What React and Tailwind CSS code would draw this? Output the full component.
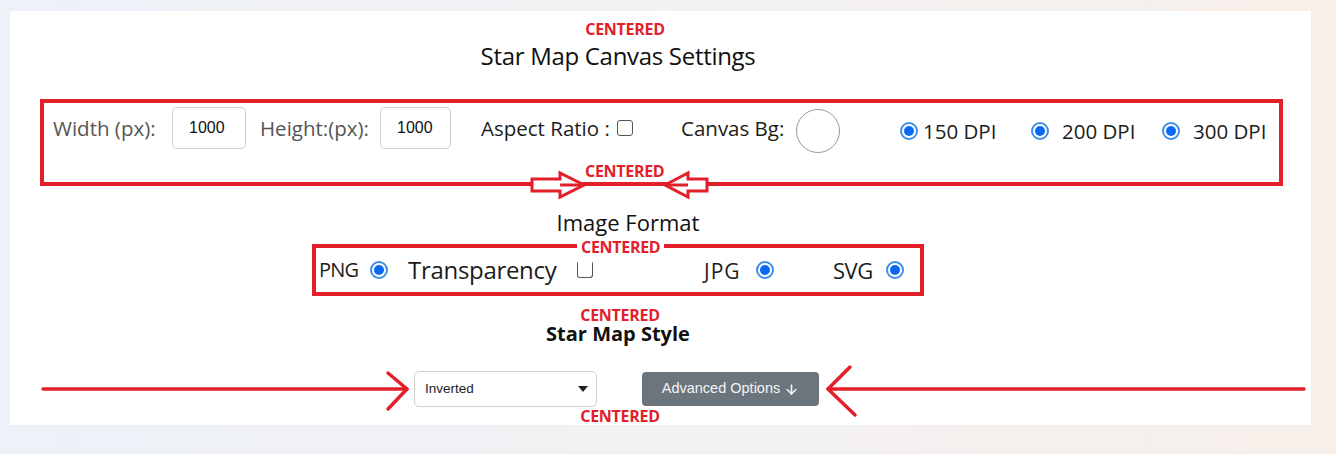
import { ArrowDown } from "lucide-react";

const sans = "font-['Open_Sans',_'Noto_Sans',_sans-serif]";
const arial = "font-['Liberation_Sans',_Arial,_sans-serif]";

function Centered({ className = "" }) {
  return (
    <div
      className={`${sans} text-[16px] leading-[16px] font-bold text-[#e3202a] tracking-[-0.3px] ${className}`}
    >
      CENTERED
    </div>
  );
}

function Radio() {
  return (
    <span className="flex h-[18px] w-[18px] shrink-0 items-center justify-center rounded-full border-[2px] border-[#3d8ee8] bg-white">
      <span className="h-[10px] w-[10px] rounded-full bg-[#0b68f2]" />
    </span>
  );
}

function Checkbox({ open = false }) {
  return (
    <span
      className={`block h-[16px] w-[16px] shrink-0 rounded-[3px] border-[1.5px] border-[#555] bg-white ${
        open ? "border-t-transparent rounded-t-none" : ""
      }`}
    />
  );
}

function SizeInput({ value, width }) {
  return (
    <div
      className={`${arial} flex h-[42px] items-center rounded-[5px] border border-[#cfcfcf] bg-white pl-[16px] text-[16px] text-[#111] ${width}`}
    >
      {value}
    </div>
  );
}

export default function App() {
  return (
    <div className="h-[454px] w-full overflow-hidden bg-linear-to-r from-[#edf1f8] via-[#f2f1f3] to-[#f7efe9] pl-[10px] pt-[11px]">
      <div className="relative h-[414px] w-[1301px] bg-white">
        <div className="flex w-[1216px] flex-col items-center pt-[10px]">
          <Centered className="ml-[14px]" />
          <h1 className={`${sans} mt-[4px] text-[24px] leading-[30px] tracking-[-0.3px] text-[#111]`}>
            Star Map Canvas Settings
          </h1>
        </div>

        {/* canvas size row */}
        <div className="relative ml-[30px] mt-[28px] h-[87px] w-[1243px] border-[4px] border-[#e3202a]">
          <div className={`${sans} flex h-[50px] items-center pl-[9px] text-[20.5px]`}>
            <span className="w-[119px] text-[#555]">Width (px):</span>
            <SizeInput value="1000" width="w-[74px]" />
            <span className="ml-[14px] w-[120px] text-[#555]">Height:(px):</span>
            <SizeInput value="1000" width="w-[71px]" />
            <span className="ml-[30px] w-[136px] text-[#1c1c1c]">Aspect Ratio :</span>
            <Checkbox />
            <span className="ml-[48px] w-[115px] text-[#1c1c1c]">Canvas Bg:</span>
            <span className="mt-[6px] block h-[44px] w-[44px] shrink-0 rounded-full border border-[#9a9a9a] bg-white" />
            <div className="mt-[6px] ml-[60px] flex items-center">
              <Radio />
              <span className="ml-[5px] w-[108px] text-[#1c1c1c]">150 DPI</span>
              <Radio />
              <span className="ml-[13px] w-[100px] text-[#1c1c1c]">200 DPI</span>
              <Radio />
              <span className="ml-[13px] text-[#1c1c1c]">300 DPI</span>
            </div>
          </div>
          <Centered className="absolute left-[541px] top-[60px]" />
          <svg
            className="absolute left-[476px] top-[64px]"
            width="200"
            height="36"
            viewBox="0 0 200 36"
            fill="none"
            stroke="#e3202a"
            strokeWidth="3"
            strokeLinejoin="miter"
          >
            <polygon points="12,12 40,12 40,6 64,18 40,30 40,24 12,24" fill="white" />
            <line x1="40" y1="18" x2="64" y2="18" />
            <polygon points="145,18 168,6 168,12 187,12 187,24 168,24 168,30" fill="white" />
            <line x1="145" y1="18" x2="168" y2="18" />
          </svg>
        </div>

        <div className="flex w-[1216px] flex-col items-center">
          <h2 className={`${sans} ml-[20px] mt-[22px] text-[22px] leading-[28px] text-[#111]`}>
            Image Format
          </h2>

          {/* image format row */}
          <div className="relative mt-[8px] h-[52px] w-[612px] border-[4px] border-[#e3202a]">
            <div className={`${sans} flex h-full items-center pl-[3px] text-[21px] text-[#1c1c1c]`}>
              <span className="w-[51px] text-[20px] tracking-[-0.8px]">PNG</span>
              <Radio />
              <span className="ml-[20px] w-[169px] text-[24px] tracking-[-0.3px]">Transparency</span>
              <Checkbox open />
              <span className="ml-[111px] w-[52px] pt-[4px] tracking-[1px]">JPG</span>
              <Radio />
              <span className="ml-[59px] w-[53px] text-[22px] tracking-[-0.5px]">SVG</span>
              <Radio />
            </div>
            <Centered className="absolute left-[261px] top-[-9px] bg-white px-[4px]" />
          </div>

          <Centered className="ml-[4px] mt-[11px]" />
          <h2 className={`${sans} mt-[1px] text-[20px] font-bold leading-[20px] text-[#111]`}>
            Star Map Style
          </h2>

          {/* style controls */}
          <div className="mt-[27px] flex items-center gap-[45px] pr-[3px]">
            <div
              className={`${arial} flex h-[36px] w-[183px] items-center justify-between rounded-[5px] border border-[#cfcfcf] bg-white pl-[10px] pr-[8px] text-[13.5px] text-[#1c1c1c]`}
            >
              <span>Inverted</span>
              <span className="h-0 w-0 border-x-[5px] border-t-[6px] border-x-transparent border-t-[#222]" />
            </div>
            <button
              className={`${arial} flex h-[34px] w-[177px] items-center justify-center gap-[4px] rounded-[4px] bg-[#6c757d] text-[14.5px] text-[#f4f4f4]`}
            >
              Advanced Options
              <ArrowDown size={15} strokeWidth={2.5} />
            </button>
          </div>
          <Centered className="ml-[4px] mt-[1px] bg-white px-[4px]" />
        </div>

        {/* side arrows */}
        <svg
          className="pointer-events-none absolute left-0 top-[342px]"
          width="1301"
          height="70"
          viewBox="0 0 1301 70"
          fill="none"
          stroke="#e3202a"
          strokeWidth="3.5"
          strokeLinecap="round"
          strokeLinejoin="round"
        >
          <line x1="33" y1="36" x2="397" y2="36" />
          <polyline points="378,20 397,36 378,56" />
          <line x1="818" y1="36" x2="1294" y2="36" />
          <polyline points="840,14 818,36 845,62" />
        </svg>
      </div>
    </div>
  );
}
